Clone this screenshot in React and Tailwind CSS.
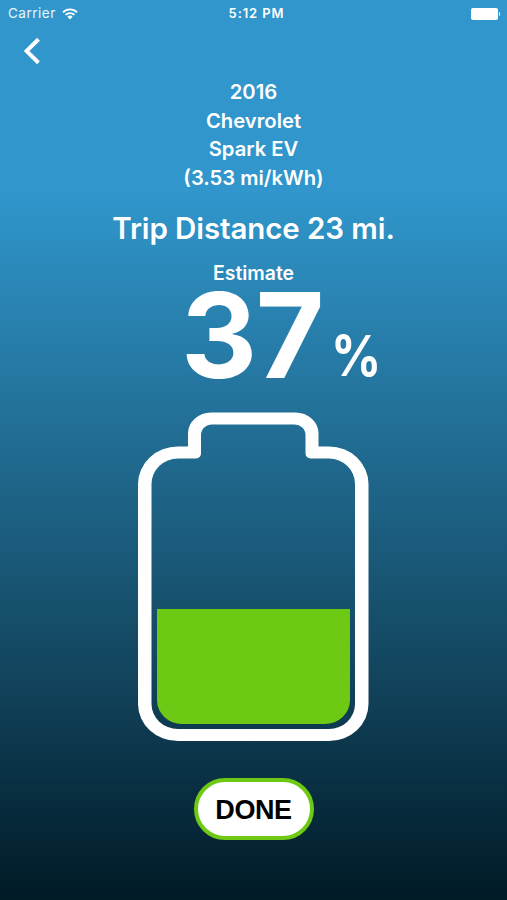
import { useState } from "react";

function StatusBar() {
  return (
    <div className="grid grid-cols-3 items-center h-7 pl-2 pr-[7px] text-white text-[13.5px]">
      <div className="flex items-center gap-[6px] pb-px">
        <span className="tracking-[0.5px] text-white/90">Carrier</span>
        <svg width="16" height="12" viewBox="0 0 16 12" fill="none" stroke="white">
          <path d="M1 4.3 A10 10 0 0 1 15 4.3" strokeWidth="1.8" />
          <path d="M3.5 6.9 A6.4 6.4 0 0 1 12.5 6.9" strokeWidth="1.8" />
          <path d="M8 11.4 L5.4 8.8 A3.7 3.7 0 0 1 10.6 8.8 Z" fill="white" stroke="none" />
        </svg>
      </div>
      <span className="text-center font-semibold tracking-[0.9px] text-[13px] whitespace-nowrap pl-[5px]">5:12 PM</span>
      <div className="flex items-center justify-end gap-[1px] pb-px">
        <div className="w-[27px] h-[12px] bg-white rounded-[2px]"></div>
        <div className="w-[1.5px] h-[4px] bg-white rounded-r-full"></div>
      </div>
    </div>
  );
}

function Battery({ percent }) {
  // a full charge would be 312 units tall, measured up from the inner floor
  const top = 724.5 - percent * 3.12;

  return (
    <svg className="block" width="231" height="329" viewBox="138 412 231 329">
      <path
        fill="white"
        fillRule="evenodd"
        d="M211 412.500 H295.500 A23 21 0 0 1 318.500 433 V446.500 H329
           A39.500 37.500 0 0 1 368.500 484 V704 A39.500 37 0 0 1 329 741
           H178 A40 37 0 0 1 138 704 V484 A40 37.500 0 0 1 178 446.500 H188
           V433 A23 21 0 0 1 211 412.500 Z
           M212 424.500 A11 10.500 0 0 0 201 435 V453.500 A5 5 0 0 1 196 458.500 H178
           A26.500 25.500 0 0 0 151.500 484 V704 A26.500 25 0 0 0 178 729
           H329 A26 25 0 0 0 355 704 V484 A26 25.500 0 0 0 329 458.500
           H310.500 A5 5 0 0 1 305.500 453.500 V435 A11 10.500 0 0 0 294.500 424.500 Z"
      />
      <path
        fill="#6dc914"
        d={`M157 ${top} H350 V700 A25 24 0 0 1 325 724 H182 A25 24 0 0 1 157 700 Z`}
      />
    </svg>
  );
}

function App() {
  const [percent] = useState(37);

  const car = ["2016", "Chevrolet", "Spark EV", "(3.53 mi/kWh)"];

  return (
    <div className="w-full h-[900px] overflow-hidden flex flex-col text-white font-['Inter',sans-serif] bg-[linear-gradient(to_bottom,#3096cb_0px,#3096cb_195px,#144963_650px,#001a26_900px)]">
      <StatusBar />

      <button className="ml-6 mt-[9px] w-4 h-7 self-start">
        <svg width="16" height="28" viewBox="0 0 16 28" fill="none">
          <path d="M14.500 2.300 L2.500 14 L14.500 25.700" stroke="white" strokeWidth="4" />
        </svg>
      </button>

      {/* Car */}
      <div className="mt-[13px] flex flex-col items-center text-[20.25px] leading-[28.5px] font-semibold">
        {car.map((line) => (
          <p key={line}>{line}</p>
        ))}
      </div>

      <h1 className="mt-[18px] text-center text-[29.5px] leading-9 font-semibold tracking-[-0.1px]">
        Trip Distance 23 mi.
      </h1>

      {/* Estimate */}
      <p className="mt-[15px] text-center text-[19.4px] leading-6 font-semibold">Estimate</p>
      <div className="flex items-baseline pl-[181px] h-[127px] leading-[100px]">
        <span className="text-[118px] font-bold tracking-[-1.5px]">{percent}</span>
        <span className="ml-[8px] text-[57px] leading-none font-bold">
          <span className="inline-block origin-left scale-x-[0.87] -translate-y-[2px]">%</span>
        </span>
      </div>

      <div className="flex justify-center">
        <Battery percent={percent} />
      </div>

      <button className="mt-[37px] mx-auto w-[120px] h-[62px] shrink-0 rounded-full border-4 border-[#6dc914] bg-white text-black text-[27px] tracking-[-0.4px] pt-[2px] font-bold font-['Liberation_Sans',sans-serif]">
        DONE
      </button>
    </div>
  );
}

export default App;
